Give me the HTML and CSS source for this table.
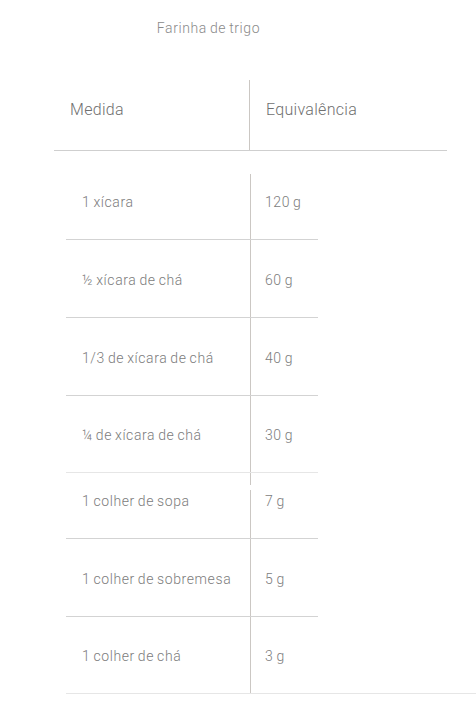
FILE: index.html
```html
<!DOCTYPE html>
<html lang="pt">
<head>
<meta charset="utf-8">
<title>Farinha de trigo</title>
<link rel="stylesheet" href="styles.css">
</head>
<body>
<main class="page">
  <h1 class="title">Farinha de trigo</h1>

  <div class="head">
    <div class="hcell hleft">Medida</div>
    <div class="hcell">Equivalência</div>
  </div>

  <div class="group">
    <div class="row first"><div class="c1">1 xícara</div><div class="c2">120 g</div></div>
    <div class="row"><div class="c1">½ xícara de chá</div><div class="c2">60 g</div></div>
    <div class="row"><div class="c1">1/3 de xícara de chá</div><div class="c2">40 g</div></div>
    <div class="row short light"><div class="c1">¼ de xícara de chá</div><div class="c2">30 g</div></div>
    <div class="tail"></div>
  </div>

  <div class="group second">
    <div class="row top"><div class="c1">1 colher de sopa</div><div class="c2">7 g</div></div>
    <div class="row"><div class="c1">1 colher de sobremesa</div><div class="c2">5 g</div></div>
    <div class="row short light wide"><div class="c1">1 colher de chá</div><div class="c2">3 g</div></div>
  </div>
</main>
</body>
</html>
```

FILE: styles.css
```css
html, body {
  margin: 0;
  padding: 0;
  background: #ffffff;
}

body {
  width: 476px;
  font-family: Roboto, "Liberation Sans", Arial, sans-serif;
  font-weight: 300;
  overflow: hidden;
}

.page {
  display: flex;
  flex-direction: column;
}

.title {
  margin: 18px 0 0 0;
  width: 417px;
  text-align: center;
  font-size: 14px;
  line-height: 20px;
  font-weight: 300;
  letter-spacing: 0.6px;
  word-spacing: -1px;
  color: #8a8a8a;
}

.head {
  margin: 42px 0 0 54px;
  width: 393px;
  display: grid;
  grid-template-columns: 196px 197px;
  border-bottom: 1px solid #cfcfcf;
}

.hcell {
  padding: 20px 0 30px 16px;
  font-size: 16px;
  line-height: 20px;
  letter-spacing: 0.3px;
  color: #707070;
}

.hleft {
  border-right: 1px solid #cbc7c3;
}

.group {
  margin: 23px 0 0 66px;
  display: flex;
  flex-direction: column;
}

.group.second {
  margin-top: 5px;
}

.row {
  width: 252px;
  height: 78px;
  box-sizing: border-box;
  display: grid;
  grid-template-columns: 185px 67px;
  border-bottom: 1px solid #d3d3d3;
  font-size: 14px;
  line-height: 20px;
  letter-spacing: 0.6px;
  word-spacing: -1px;
  color: #7c7c7c;
}

.row.first {
  height: 66px;
}

.row.short {
  height: 77px;
}

.row.top {
  height: 49px;
}

.row.light {
  border-bottom-color: #e6e6e6;
}

.row.wide {
  width: 410px;
  grid-template-columns: 185px 67px 1fr;
}

.c1, .c2 {
  display: flex;
  align-items: flex-end;
  padding-bottom: 27px;
}

.c1 {
  padding-left: 16px;
  border-right: 1px solid #cbc7c3;
}

.c2 {
  padding-left: 14px;
}

.tail {
  width: 184px;
  height: 12px;
  border-right: 1px solid #cbc7c3;
}
```
